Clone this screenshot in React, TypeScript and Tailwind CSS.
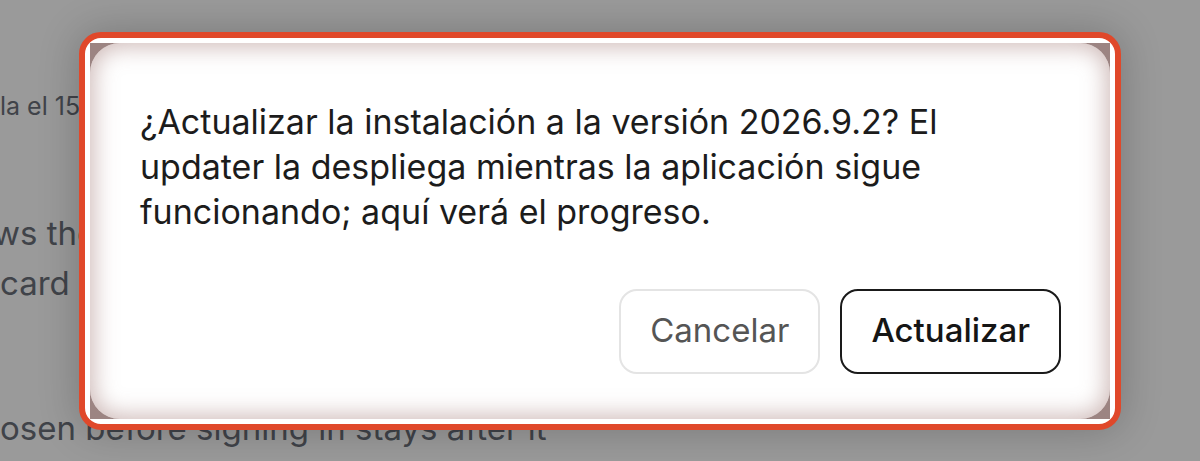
export default function App() {
  return (
    <div className="relative h-[461px] w-[1200px] overflow-hidden bg-[#9a9a9a] font-['Inter','Liberation_Sans',sans-serif]">
      {/* page behind the overlay */}
      <div className="flex flex-col whitespace-nowrap text-[#404349]">
        <p className="mt-[91px] w-[90px] overflow-hidden text-[25px] leading-[30px]">la el 15</p>
        <p className="mt-[87px] -ml-[7px] w-[97px] overflow-hidden text-[33px] leading-[50px]">ws the</p>
        <p className="w-[90px] overflow-hidden text-[33px] leading-[50px]">card</p>
        <p className="mt-[95px] text-[33px] leading-[50px]">osen before signing in stays after it</p>
      </div>

      {/* dialog */}
      <div className="absolute inset-0 flex items-center justify-center">
        <div className="h-[398px] w-[1042px] rounded-[22px] border-[6px] border-[#e0482a] bg-white p-[5px] shadow-[0_0_40px_rgba(0,0,0,0.22)]">
          <div className="h-full w-full bg-[#9c8482]">
            <div className="flex h-full w-full flex-col rounded-[30px] bg-white pb-[45px] pl-[50px] pr-[49px] pt-[56px] shadow-[inset_0_0_22px_4px_rgba(160,120,115,0.5)]">
              <p className="max-w-[850px] text-[34px] leading-[45px] text-[#1c1c1c]">
                ¿Actualizar la instalación a la versión 2026.9.2? El updater la despliega mientras la aplicación sigue funcionando; aquí verá el progreso.
              </p>
              <div className="mt-auto flex justify-end gap-[20px]">
                <button className="h-[85px] rounded-[18px] border-2 border-[#e4e4e4] bg-white px-[29px] text-[33px] text-[#555]">
                  Cancelar
                </button>
                <button className="h-[85px] rounded-[18px] border-2 border-[#1a1a1a] bg-white px-[29px] text-[33px] font-medium text-[#151515]">
                  Actualizar
                </button>
              </div>
            </div>
          </div>
        </div>
      </div>
    </div>
  );
}
